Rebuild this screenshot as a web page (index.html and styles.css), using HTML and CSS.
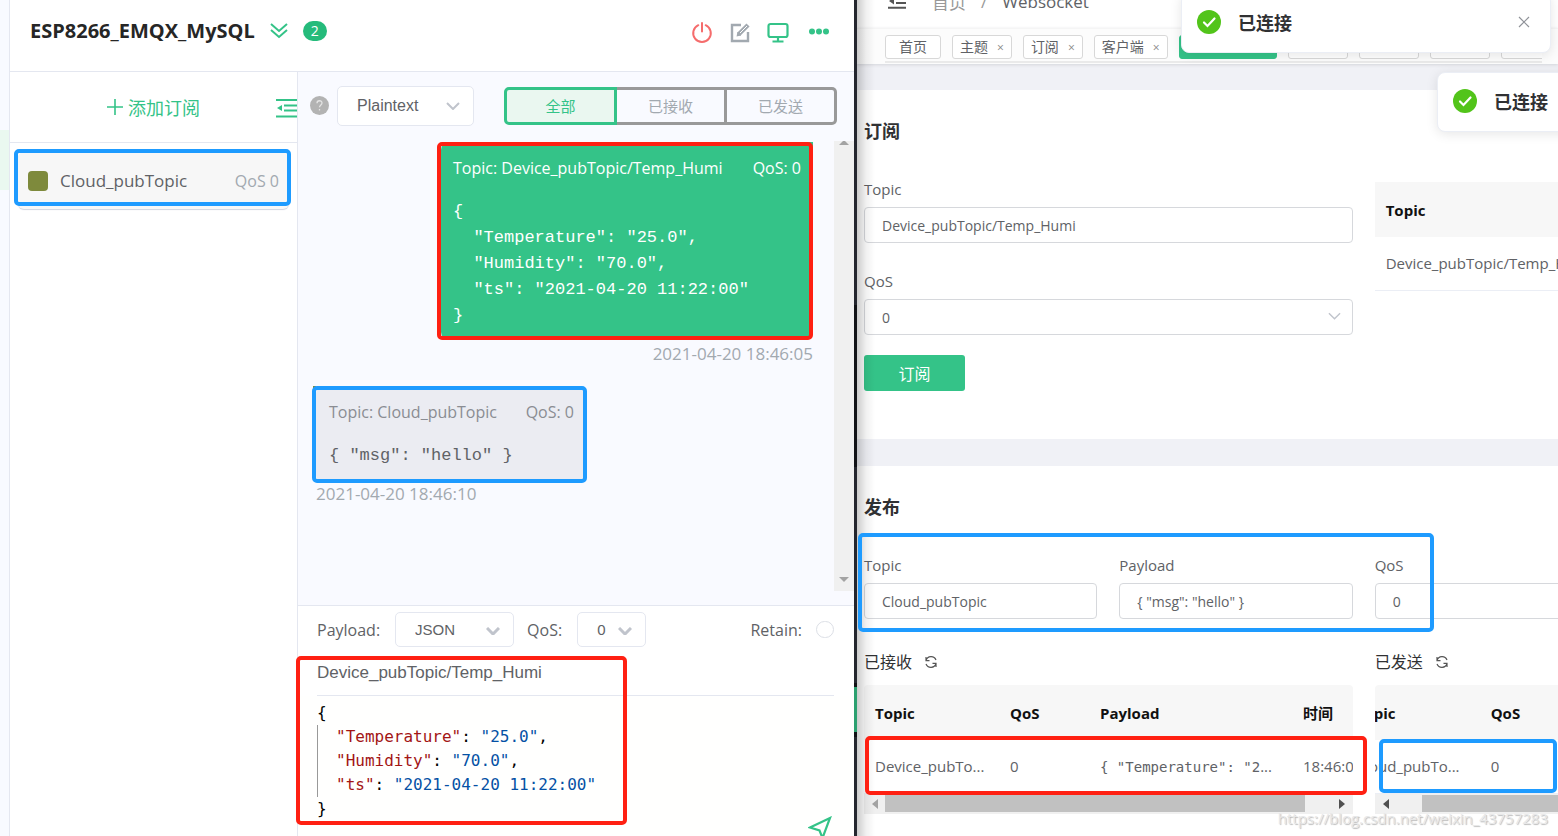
FILE: index.html
```html
<!DOCTYPE html>
<html lang="zh-CN">
<head>
<meta charset="utf-8">
<title>ESP8266_EMQX_MySQL</title>
<link rel="stylesheet" href="styles.css">
</head>
<body>
<main class="client">
  <div class="rail"><div class="rail-active"></div></div>
  <div class="client-main">
    <header class="client-head">
      <h1 class="client-title">ESP8266_EMQX_MySQL</h1>
      <svg class="icon-fold" width="18" height="16" viewBox="0 0 18 16" fill="none" stroke="#34c388" stroke-width="2"><path d="M1 1l8 7 8-7M1 7l8 7 8-7"/></svg>
      <span class="badge">2</span>
      <div class="head-actions">
        <button class="icon-btn" aria-label="断开"><svg width="22" height="22" viewBox="0 0 22 22" fill="none" stroke="#f56c6c" stroke-width="2" stroke-linecap="round"><path d="M11 1v8.500M7.300 3.200a8.800 8.800 0 1 0 7.400 0"/></svg></button>
        <button class="icon-btn" aria-label="编辑"><svg width="22" height="22" viewBox="0 0 22 22" fill="none" stroke="#a2a9b0" stroke-width="2.400"><path d="M12 3H3v16h16v-9"/><path d="M7.500 14.500l1-4.500 3.500 3.500z" fill="#a2a9b0" stroke="none"/><path d="M9.500 12.500L19 3" stroke-width="4.400"/><path d="M11 11l7-7" stroke="#fff" stroke-width="1"/></svg></button>
        <button class="icon-btn" aria-label="窗口"><svg width="22" height="22" viewBox="0 0 22 22" fill="none" stroke="#34c388" stroke-width="2.200"><rect x="1.500" y="2" width="19" height="13" rx="2"/><path d="M11 15v4M5.500 19.500h11"/></svg></button>
        <button class="icon-btn more" aria-label="更多"><svg width="22" height="22" viewBox="0 0 22 22" fill="#34c388"><circle cx="4" cy="9.500" r="3"/><circle cx="11" cy="9.500" r="3"/><circle cx="18" cy="9.500" r="3"/></svg></button>
      </div>
    </header>
    <div class="client-body">
      <aside class="subs">
        <div class="subs-head">
          <button class="add-sub"><svg width="16" height="16" viewBox="0 0 16 16" stroke="#34c388" stroke-width="1.600"><path d="M8 0v16M0 8h16"/></svg>添加订阅</button>
          <button class="icon-btn collapse" aria-label="收起"><svg width="21" height="20" viewBox="0 0 21 20"><path d="M0 2h21M8 7.500h13M8 12.500h13M0 18.500h21" stroke="#34c388" stroke-width="2"/><path d="M1 10l5-3v6z" fill="#34c388"/></svg></button>
        </div>
        <div class="sub-item">
          <span class="sub-color"></span>
          <span class="sub-topic">Cloud_pubTopic</span>
          <span class="sub-qos">QoS 0</span>
          <span class="mark mark-blue mark-sub"></span>
        </div>
      </aside>
      <section class="chat">
        <div class="filters">
          <svg width="19" height="19" viewBox="0 0 19 19"><circle cx="9.500" cy="9.500" r="9.500" fill="#b3b3b3"/><path d="M7 7.200c0-3.300 5-3.200 5-.2 0 1.900-2.500 2-2.500 4.300M9.500 13v1.600" fill="none" stroke="#e4e4e4" stroke-width="1.300"/></svg>
          <div class="select-box format-box">
            <select class="select" aria-label="格式"><option>Plaintext</option></select>
            <svg class="chev" width="14" height="8" viewBox="0 0 14 8"><path d="M1 1l6 6 6-6"/></svg>
          </div>
          <div class="tabs">
            <button class="tab tab-on">全部</button><button class="tab">已接收</button><button class="tab">已发送</button>
          </div>
        </div>
        <div class="messages">
          <div class="msg-list">
            <article class="msg msg-out">
              <div class="bubble bubble-out">
                <p class="msg-meta"><span>Topic: Device_pubTopic/Temp_Humi</span><span>QoS: 0</span></p>
                <pre class="msg-text">{
  "Temperature": "25.0",
  "Humidity": "70.0",
  "ts": "2021-04-20 11:22:00"
}</pre>
                <span class="mark mark-red mark-out"></span>
              </div>
              <time class="msg-time">2021-04-20 18:46:05</time>
            </article>
            <article class="msg msg-in">
              <div class="bubble bubble-in">
                <p class="msg-meta"><span>Topic: Cloud_pubTopic</span><span>QoS: 0</span></p>
                <pre class="msg-text">{ "msg": "hello" }</pre>
                <span class="mark mark-blue mark-in"></span>
              </div>
              <time class="msg-time">2021-04-20 18:46:10</time>
            </article>
          </div>
          <div class="vbar">
            <svg width="10" height="4" viewBox="0 0 10 4" fill="#a3a3a3"><path d="M0 4l4-4h2l4 4z"/></svg>
            <svg width="10" height="5" viewBox="0 0 10 5" fill="#a3a3a3"><path d="M0 0h10L5 5z"/></svg>
          </div>
        </div>
        <div class="composer">
          <div class="composer-opts">
            <label for="payload-type">Payload:</label>
            <div class="select-box type-box">
              <select class="select" id="payload-type"><option>JSON</option></select>
              <svg class="chev chev-bold" width="14" height="8" viewBox="0 0 14 8"><path d="M1 1l6 6 6-6"/></svg>
            </div>
            <label for="msg-qos">QoS:</label>
            <div class="select-box qos-box">
              <select class="select" id="msg-qos"><option>0</option></select>
              <svg class="chev chev-bold" width="14" height="8" viewBox="0 0 14 8"><path d="M1 1l6 6 6-6"/></svg>
            </div>
            <label class="retain-label" for="retain">Retain:</label>
            <input class="retain" type="radio" id="retain">
          </div>
          <div class="editor">
            <input class="topic-input" aria-label="Topic" value="Device_pubTopic/Temp_Humi">
            <div class="code">
              <div>{</div>
              <div class="code-inner">
                <div><span class="k">"Temperature"</span><span>: </span><span class="s">"25.0"</span><span>,</span></div>
                <div><span class="k">"Humidity"</span><span>: </span><span class="s">"70.0"</span><span>,</span></div>
                <div><span class="k">"ts"</span><span>: </span><span class="s">"2021-04-20 11:22:00"</span></div>
              </div>
              <div>}</div>
            </div>
            <span class="mark mark-red mark-editor"></span>
            <button class="icon-btn send" aria-label="发送"><svg width="24" height="24" viewBox="0 0 24 24" fill="none" stroke="#34c388" stroke-width="2.200"><path d="M2 11.500L22 2l-7.500 20-3-7.500z"/></svg></button>
          </div>
        </div>
      </section>
    </div>
  </div>
</main>
<div class="divider"></div>
<main class="console">
  <header class="crumbs">
    <svg width="18" height="16" viewBox="0 0 18 16"><path d="M0 1.500h18M8 5.800h10M8 10h10M0 14.800h18" stroke="#555" stroke-width="2"/><path d="M1 8l5-3.500v7z" fill="#555"/></svg>
    <a href="#" class="crumb-home">首页</a><span class="crumb-sep">/</span><span>Websocket</span>
  </header>
  <nav class="tags">
    <div class="tags-row">
      <a class="tag tag-home" href="#">首页</a>
      <a class="tag" href="#">主题<i>×</i></a>
      <a class="tag" href="#">订阅<i>×</i></a>
      <a class="tag" href="#">客户端<i>×</i></a>
      <a class="tag tag-on" href="#" aria-label="Websocket"></a>
      <span class="tag tag-rest"></span><span class="tag tag-rest"></span><span class="tag tag-rest"></span><span class="tag tag-rest"></span>
    </div>
  </nav>
  <section class="card card-sub">
    <h2 class="card-title">订阅</h2>
    <div class="grid">
      <div class="sub-form">
        <div class="field"><label for="sub-topic">Topic</label><input class="input" id="sub-topic" value="Device_pubTopic/Temp_Humi"></div>
        <div class="field"><label for="sub-qos">QoS</label>
          <div class="field-select"><select class="input" id="sub-qos"><option>0</option></select>
          <svg class="chev chev-field" width="13" height="8" viewBox="0 0 14 8"><path d="M1 1l6 6 6-6"/></svg></div>
        </div>
        <button class="primary">订阅</button>
      </div>
      <div class="sub-table">
        <table class="table">
          <thead><tr><th>Topic</th></tr></thead>
          <tbody><tr><td>Device_pubTopic/Temp_Humi</td></tr></tbody>
        </table>
      </div>
    </div>
  </section>
  <section class="card card-pub">
    <h2 class="card-title">发布</h2>
    <div class="grid pub-form">
      <div class="field"><label for="pub-topic">Topic</label><input class="input" id="pub-topic" value="Cloud_pubTopic"></div>
      <div class="field"><label for="pub-payload">Payload</label><input class="input" id="pub-payload" value='{ "msg": "hello" }'></div>
      <div class="field qos-field"><label for="pub-qos">QoS</label><select class="input" id="pub-qos"><option>0</option></select></div>
      <span class="mark mark-blue mark-pub"></span>
    </div>
    <div class="grid logs">
      <div class="log">
        <h3 class="log-title">已接收<svg width="14" height="14" viewBox="0 0 14 14" fill="none" stroke="#555" stroke-width="1.200"><path d="M2 5.500A5.300 5.300 0 0 1 12 5M12 8.500A5.300 5.300 0 0 1 2 9M2 2v3.700h3.500M12 12V8.300H8.500"/></svg></h3>
        <div class="scroll">
          <table class="table log-table">
            <thead><tr><th class="c-topic">Topic</th><th class="c-qos">QoS</th><th class="c-payload">Payload</th><th class="c-time">时间</th></tr></thead>
            <tbody><tr><td>Device_pubTo...</td><td>0</td><td><span class="mono">{ "Temperature": "2</span><span>...</span></td><td>18:46:05</td></tr></tbody>
          </table>
          <div class="hbar">
            <svg width="6" height="10" viewBox="0 0 6 10" fill="#a3a3a3"><path d="M6 0v10L0 5z"/></svg>
            <div class="thumb"></div>
            <svg width="6" height="10" viewBox="0 0 6 10" fill="#505050"><path d="M0 0v10l6-5z"/></svg>
          </div>
        </div>
        <span class="mark mark-red mark-recv"></span>
      </div>
      <div class="log">
        <h3 class="log-title">已发送<svg width="14" height="14" viewBox="0 0 14 14" fill="none" stroke="#555" stroke-width="1.200"><path d="M2 5.500A5.300 5.300 0 0 1 12 5M12 8.500A5.300 5.300 0 0 1 2 9M2 2v3.700h3.500M12 12V8.300H8.500"/></svg></h3>
        <div class="scroll">
          <table class="table log-table log-shifted">
            <thead><tr><th class="c-topic">Topic</th><th class="c-qos">QoS</th><th class="c-payload"></th><th class="c-time"></th></tr></thead>
            <tbody><tr><td>Cloud_pubTo...</td><td>0</td><td></td><td></td></tr></tbody>
          </table>
          <div class="hbar hbar-sent">
            <svg width="6" height="10" viewBox="0 0 6 10" fill="#505050"><path d="M6 0v10L0 5z"/></svg>
            <div class="thumb"></div>
          </div>
        </div>
        <span class="mark mark-blue mark-sent"></span>
      </div>
    </div>
  </section>
  <div class="edge-shade"></div>
  <div class="toast toast-first">
    <svg width="24" height="24" viewBox="0 0 24 24"><circle cx="12" cy="12" r="12" fill="#52c41a"/><path d="M7 12.500l3.500 3.500 7-7.500" fill="none" stroke="#fff" stroke-width="2.200" stroke-linecap="round"/></svg>
    <strong>已连接</strong>
    <button class="icon-btn toast-close" aria-label="关闭"><svg width="12" height="12" viewBox="0 0 12 12" stroke="#909399" stroke-width="1.200"><path d="M1 1l10 10M11 1L1 11"/></svg></button>
  </div>
  <div class="toast toast-second">
    <svg width="24" height="24" viewBox="0 0 24 24"><circle cx="12" cy="12" r="12" fill="#52c41a"/><path d="M7 12.500l3.500 3.500 7-7.500" fill="none" stroke="#fff" stroke-width="2.200" stroke-linecap="round"/></svg>
    <strong>已连接</strong>
  </div>
  <p class="watermark">https://blog.csdn.net/weixin_43757283</p>
</main>
</body>
</html>
```

FILE: styles.css
```css
* { box-sizing: border-box; }
body {
  margin: 0;
  height: 100vh;
  display: flex;
  overflow: hidden;
  background: #fff;
  color: #606266;
  font-family: "Open Sans", "Noto Sans CJK SC", sans-serif;
  font-size: 14px;
}
h1, h2, h3, p, pre { margin: 0; }
a { color: inherit; text-decoration: none; }
button, input, select { font: inherit; color: inherit; }
button { cursor: pointer; }
svg { display: block; flex: none; }
.icon-btn { padding: 0; border: 0; background: none; }

/* annotation frames */
.mark { position: absolute; border: 4px solid; border-radius: 5px; pointer-events: none; z-index: 2; }
.mark-blue { border-color: #1e9bff; }
.mark-red { border-color: #ff2012; }

/* desktop client */
.client { flex: 854 1 0; min-width: 0; display: flex; }
.rail { width: 10px; flex: none; padding-top: 130px; background: #f8faff; border-right: 1px solid #e4e7f0; }
.rail-active { height: 60px; background: #eaf8f0; }
.client-main { flex: 1; min-width: 0; display: flex; flex-direction: column; }
.client-head { height: 72px; flex: none; display: flex; align-items: center; padding: 0 24px 10px 20px; border-bottom: 1px solid #e4e7f0; }
.client-title { font-size: 20px; font-weight: 700; color: #262626; }
.icon-fold { margin-left: 15px; }
.badge { margin-left: 15px; width: 24px; height: 20px; border-radius: 10px; background: #25bb7b; color: #fff; font-size: 14px; line-height: 20px; text-align: center; }
.head-actions { margin-left: auto; display: flex; gap: 16px; padding-top: 4px; }
.more { margin-left: 3px; }
.client-body { flex: 1; min-height: 0; display: flex; }

.subs { width: 288px; flex: none; border-right: 1px solid #e4e7f0; }
.subs-head { position: relative; height: 71px; display: flex; align-items: center; justify-content: center; border-bottom: 1px solid #e4e7f0; }
.add-sub { display: flex; align-items: center; gap: 5px; border: 0; background: none; color: #34c388; font-size: 18px; }
.collapse { position: absolute; right: 0; top: 26px; }
.sub-item { position: relative; margin: 9px 8px 0 8px; height: 57px; padding: 0 10px; display: flex; align-items: center; background: #f7f7f7; border-radius: 6px; box-shadow: 0 1px 1px #d0d4e0; }
.sub-color { width: 20px; height: 20px; border-radius: 4px; background: #7e8a3c; }
.sub-topic { margin-left: 12px; font-size: 17px; }
.sub-qos { margin-left: auto; font-size: 16px; color: #a2a9b0; }
.mark-sub { inset: -3px -2px 3px -4px; }

.chat { flex: 1; min-width: 0; display: flex; flex-direction: column; background: #f9faff; }
.filters { height: 69px; flex: none; display: flex; align-items: center; padding: 0 17px 2px 12px; }
.select-box { position: relative; background: #fff; border: 1px solid #e4e7f0; border-radius: 5px; }
.select { appearance: none; width: 100%; height: 100%; border: 0; background: none; padding: 0 19px; font-family: "Liberation Sans", sans-serif; outline: 0; }
.chev { position: absolute; right: 13px; top: 15px; fill: none; stroke: #c0c4cc; stroke-width: 2; pointer-events: none; }
.format-box { width: 137px; height: 40px; margin-left: 8px; font-size: 16px; }
.tabs { margin-left: auto; display: flex; width: 333px; height: 38px; }
.tab { flex: 1; padding: 0; border: 3px solid #999; border-left-width: 0; background: transparent; color: #a2a9b0; font-size: 15px; }
.tab:last-child { border-radius: 0 5px 5px 0; }
.tab-on { border: 3px solid #34c388; border-radius: 5px 0 0 5px; background: #eaf7f0; color: #34c388; }
.messages { flex: 1; min-height: 0; display: flex; }
.msg-list { flex: 1; min-width: 0; padding: 1px 21px 0 15px; overflow: hidden; }
.vbar { width: 20px; margin-bottom: 14px; background: #f0f0f0; display: flex; flex-direction: column; align-items: center; justify-content: space-between; padding-bottom: 9px; }
.msg { display: flex; flex-direction: column; }
.msg-out { align-items: flex-end; }
.msg-in { align-items: flex-start; margin-top: 18px; padding-left: 3px; }
.bubble { position: relative; padding: 14px 12px; border-radius: 8px; }
.bubble-out { width: 372px; height: 198px; background: #34c388; color: #fff; border-top-right-radius: 0; }
.bubble-in { width: 270px; height: 97px; padding-left: 13px; background: #ebecf2; color: #8a8d93; }
.bubble-in::before { content: ""; position: absolute; left: -3px; top: 0; width: 3px; height: 84px; background: #7e8a3c; }
.msg-meta { display: flex; justify-content: space-between; font-size: 16px; line-height: 24px; white-space: nowrap; }
.msg-text { margin-top: 19px; font: 17px/26px "Liberation Mono", monospace; }
.bubble-in .msg-text { color: #606266; }
.msg-time { font-size: 17px; line-height: 28px; color: #a2a9b0; }
.msg-in .msg-time { line-height: 22px; }
.mark-out { inset: 0 0 0 -4px; }
.mark-in { inset: 0 -1px 0 -4px; }

.composer { flex: none; height: 231px; border-top: 1px solid #e4e7f0; background: #fff; }
.composer-opts { height: 47px; padding: 0 20px 0 19px; display: flex; align-items: center; font-size: 16px; }
.composer .select-box { height: 35px; font-size: 15px; }
.type-box { width: 119px; margin: 0 13px 0 15px; }
.qos-box { width: 69px; margin-left: 15px; }
.chev-bold { top: 14px; stroke-width: 3; }
.retain-label { margin-left: auto; }
.retain { appearance: none; width: 18px; height: 17px; margin: 0 0 0 14px; border: 1px solid #dcdfe6; border-radius: 9px; background: #fff; }
.editor { position: relative; padding: 0 20px 0 19px; height: 183px; background: linear-gradient(#fff 43px, #fffffe 43px); }
.topic-input { display: block; width: 100%; height: 43px; border: 0; border-bottom: 1px solid #e4e7f0; padding: 0 0 2px; background: none; font: 17px "Liberation Sans", sans-serif; outline: 0; }
.code { padding-top: 5px; font: 16px/24px "DejaVu Sans Mono", monospace; color: #000; white-space: nowrap; }
.code-inner { padding-left: 18px; border-left: 1px solid #999; }
.code-inner span { white-space: pre; }
.code .k { color: #a31515; }
.code .s { color: #0451a5; }
.mark-editor { left: -2px; top: 3px; width: 331px; height: 169px; }
.send { position: absolute; right: 22px; top: 163px; }

.divider { width: 3px; flex: none; background: linear-gradient(#24262e 305px, #111216 305px 467px, #24262e 467px 683px, #111216 683px 687px, #2ba06f 687px 732px, #111216 732px 737px, #24262e 737px); }

/* web console */
.console { position: relative; flex: 701 1 0; min-width: 0; overflow: hidden; background: #f0f1f6; display: flex; flex-direction: column; }
.crumbs { flex: none; height: 54px; margin-top: -26px; padding-left: 31px; display: flex; align-items: center; background: #fff; font-size: 17px; }
.crumb-home { margin-left: 26px; color: #999; }
.crumb-sep { margin: 0 15px; color: #999; }
.tags { flex: none; padding: 6px 16px 0 28px; height: 36px; background: #fcfcfc; border-top: 1px solid #f5f5f5; box-shadow: 0 1px 3px #d4d5da; }
.tags-row { display: flex; gap: 11px; height: 28px; border-bottom: 2px solid #eaeaea; overflow: hidden; }
.tag { flex: none; height: 24px; padding: 0 7px; border: 1px solid #d8d8d8; border-radius: 3px; background: #fff; font-size: 14px; line-height: 22px; }
.tag i { margin-left: 9px; font-size: 12px; font-style: normal; color: #888; }
.tag-home { padding: 0 13px; }
.tag-on { width: 98px; background: #34c388; border-color: #34c388; }
.tag-rest { width: 60px; }
.card { background: #fff; padding: 28px 0 0 7px; flex: none; }
.card-sub { height: 349px; margin-top: 26px; }
.card-pub { height: 400px; margin-top: 27px; }
.card-title { font-size: 18px; line-height: 26px; font-weight: 700; color: #303133; }
.grid { position: relative; width: 144%; display: grid; grid-template-columns: repeat(4, minmax(0, 1fr)); gap: 0 22px; }
.card-sub .grid { padding-top: 38px; }
.sub-form, .sub-table, .log, .qos-field { grid-column: span 2; }
.field { font-size: 15px; }
.field label { display: block; line-height: 14px; margin-bottom: 11px; }
.sub-form .field { margin-bottom: 31px; }
.sub-form .field + .field { margin-bottom: 20px; }
.input { display: block; width: 100%; height: 36px; appearance: none; border: 1px solid #d6d8dc; border-radius: 4px; background: #fff; padding: 0 17px; font-size: 14px; outline: 0; }
.field-select { position: relative; }
.chev-field { right: 12px; top: 13px; stroke-width: 1.5; }
.primary { display: block; width: 101px; height: 36px; border: 0; border-radius: 3px; background: #34c388; color: #fff; font-size: 16px; }
.table { width: 100%; border-collapse: collapse; text-align: left; font-size: 15px; }
.table th { height: 55px; padding: 0 11px; background: #f7f7f7; color: #111; font-weight: 700; }
.table td { height: 53px; padding: 0 11px; border-bottom: 1px solid #ebeef5; white-space: nowrap; }
.pub-form { margin-top: 38px; }
.mark-pub { left: -6px; top: -25px; width: 576px; height: 99px; }
.logs { margin-top: 32px; }
.log { position: relative; min-width: 0; }
.log-title { display: flex; align-items: center; gap: 12px; font-size: 16px; font-weight: 400; line-height: 22px; color: #303133; margin-bottom: 12px; }
.scroll { overflow: hidden; border-radius: 4px 4px 0 0; }
.log-table { width: 540px; table-layout: fixed; }
.log-shifted { margin-left: -30px; }
.c-topic { width: 135px; }
.c-qos { width: 90px; }
.c-payload { width: 203px; }
.c-time { width: 112px; }
.mono { font-family: "DejaVu Sans Mono", monospace; font-size: 14px; }
.hbar { height: 20px; padding: 0 8px; display: flex; align-items: center; background: #f0f0f0; }
.thumb { height: 17px; width: 420px; margin: 0 auto 0 7px; background: #c1c1c1; }
.hbar-sent .thumb { margin-left: 33px; }
.mark-recv { left: 1px; right: -14px; top: 85px; height: 59px; }
.mark-sent { left: 4px; top: 88px; width: 178px; height: 54px; }
.edge-shade { position: absolute; inset: 0 auto 0 0; width: 18px; background: linear-gradient(90deg, rgba(0,0,0,.2), rgba(0,0,0,.06) 50%, transparent); pointer-events: none; }
.toast { position: absolute; display: flex; align-items: center; width: 370px; background: #fff; border: 1px solid #ebeef5; border-radius: 8px; box-shadow: 0 2px 12px rgba(0,0,0,.1); z-index: 3; padding: 0 20px 2px 15px; font-size: 18px; color: #303133; }
.toast strong { margin-left: 17px; }
.toast-first { right: 7px; top: -7px; height: 60px; }
.toast-second { right: -249px; top: 72px; height: 60px; }
.toast-close { margin-left: auto; }
.watermark { position: absolute; right: 10px; bottom: 8px; font-size: 15px; color: #e8e8e8; text-shadow: 1px 1px 1px #bbb; z-index: 3; }
```
